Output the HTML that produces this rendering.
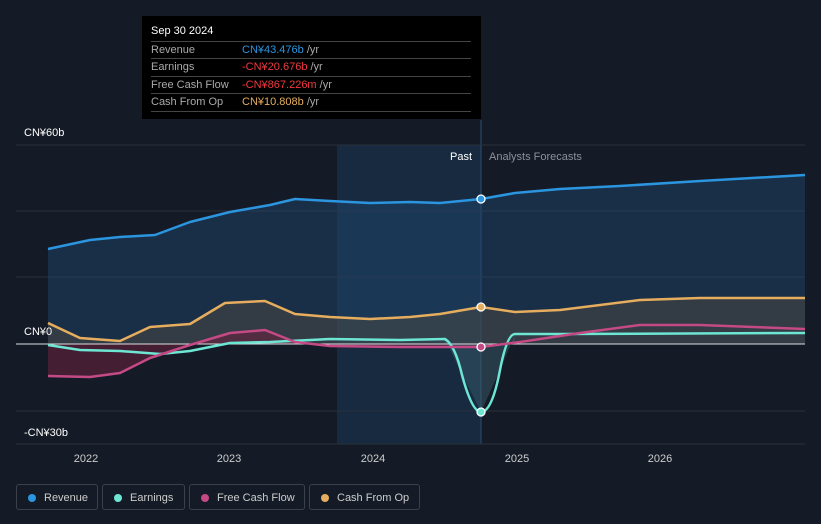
<!DOCTYPE html><html><head><style>
body{margin:0;background:#151b26;width:821px;height:524px;overflow:hidden;font-family:"Liberation Sans",sans-serif}
.tt{position:absolute;left:142px;top:16px;width:339px;height:103px;background:#000;color:#fff;font-size:11px}
.tt .h{position:absolute;left:9px;top:9px;font-size:11px}
.row{position:absolute;left:9px;width:320px;border-top:1px solid #444;height:17px;line-height:17px;color:#aaa}
.row span{position:absolute;left:91px}
.lg{position:absolute;top:484px;height:26px;border:1px solid #3a404c;border-radius:3px;color:#ccc;font-size:11px;line-height:26px;box-sizing:border-box}
.lg i{position:absolute;left:11px;top:9px;width:8px;height:8px;border-radius:50%}
.lg b{font-weight:normal;position:absolute;left:27px}
</style></head><body>
<svg width="821" height="524" style="position:absolute;left:0;top:0">
<rect x="337" y="145" width="144" height="299" fill="#18304a" opacity=".75"/>
<line x1="481" y1="120" x2="481" y2="444" stroke="#2b4e70"/>
<g stroke="#2a303b"><line x1="16" y1="145" x2="805" y2="145"/><line x1="16" y1="211" x2="805" y2="211"/><line x1="16" y1="277" x2="805" y2="277"/><line x1="16" y1="411" x2="805" y2="411"/><line x1="16" y1="444" x2="805" y2="444"/></g>
<path d="M48,249 L90,240 120,237 155,235 190,222 230,212 270,205 295,199 330,201 370,203 410,202 440,203 481,199 515,193 560,189 620,186 700,181 805,175 L805,344 L48,344Z" fill="#1e4870" opacity=".45"/>
<path d="M48,323 L80,338 120,341 150,327 190,324 225,303 265,301 295,314 330,317 370,319 410,317 440,314 481,307 515,312 560,310 640,300 700,298 805,298 L805,344 48,344Z" fill="#5a5140" opacity=".4"/>
<path d="M48,376 L90,377 120,373 150,358 190,345 230,333 265,330 295,342 330,346 400,347 481,347 L481,344 48,344Z" fill="#6b2340" opacity=".55"/>
<path d="M445,339 L460,370 481,412 500,370 515,334 L515,344 445,344Z" fill="#3a5a6a" opacity=".5"/>
<line x1="16" y1="344" x2="805" y2="344" stroke="#ddd"/>
<g fill="none" stroke-width="2.5" stroke-linejoin="round">
<path d="M48,345 L80,350 120,351 160,354 190,351 230,343 270,342 330,339 400,340 445,339 Q455,345 462,375 Q472,412 481,412 Q492,412 500,370 Q507,334 515,334 L560,334 805,333" stroke="#6ee6d4"/>
<path d="M48,376 L90,377 120,373 150,358 190,345 230,333 265,330 295,342 330,346 400,347 481,347 520,342 580,333 640,325 700,325 805,329" stroke="#c44a86"/>
<path d="M48,323 L80,338 120,341 150,327 190,324 225,303 265,301 295,314 330,317 370,319 410,317 440,314 481,307 515,312 560,310 640,300 700,298 805,298" stroke="#e6ad5e"/>
<path d="M48,249 L90,240 120,237 155,235 190,222 230,212 270,205 295,199 330,201 370,203 410,202 440,203 481,199 515,193 560,189 620,186 700,181 805,175" stroke="#2b95e0"/>
</g>
<g stroke="#fff" stroke-width="1.3"><circle cx="481" cy="199" r="4" fill="#2b95e0"/><circle cx="481" cy="307" r="4" fill="#e6ad5e"/><circle cx="481" cy="347" r="4" fill="#c44a86"/><circle cx="481" cy="412" r="4" fill="#6ee6d4"/></g>
<g font-size="11" fill="#fff"><text x="24" y="136">CN¥60b</text><text x="24" y="335">CN¥0</text><text x="24" y="436">-CN¥30b</text></g>
<text x="450" y="160" font-size="11" fill="#fff">Past</text><text x="489" y="160" font-size="11" fill="#8a919c">Analysts Forecasts</text>
<g font-size="11" fill="#ccc" text-anchor="middle"><text x="86" y="462">2022</text><text x="229" y="462">2023</text><text x="373" y="462">2024</text><text x="517" y="462">2025</text><text x="660" y="462">2026</text></g>
</svg>
<div class="tt"><div class="h">Sep 30 2024</div>
<div class="row" style="top:25px">Revenue<span style="color:#2b95e0">CN¥43.476b <em style="font-style:normal;color:#aaa">/yr</em></span></div>
<div class="row" style="top:42px">Earnings<span style="color:#f0393f">-CN¥20.676b <em style="font-style:normal;color:#aaa">/yr</em></span></div>
<div class="row" style="top:60px">Free Cash Flow<span style="color:#f0393f">-CN¥867.226m <em style="font-style:normal;color:#aaa">/yr</em></span></div>
<div class="row" style="top:77px;border-bottom:1px solid #444">Cash From Op<span style="color:#e6ad5e">CN¥10.808b <em style="font-style:normal;color:#aaa">/yr</em></span></div>
</div>
<div class="lg" style="left:16px;width:82px"><i style="background:#2b95e0"></i><b>Revenue</b></div>
<div class="lg" style="left:102px;width:83px"><i style="background:#6ee6d4"></i><b>Earnings</b></div>
<div class="lg" style="left:189px;width:116px"><i style="background:#c44a86"></i><b>Free Cash Flow</b></div>
<div class="lg" style="left:309px;width:111px"><i style="background:#e6ad5e"></i><b>Cash From Op</b></div>
</body></html>
